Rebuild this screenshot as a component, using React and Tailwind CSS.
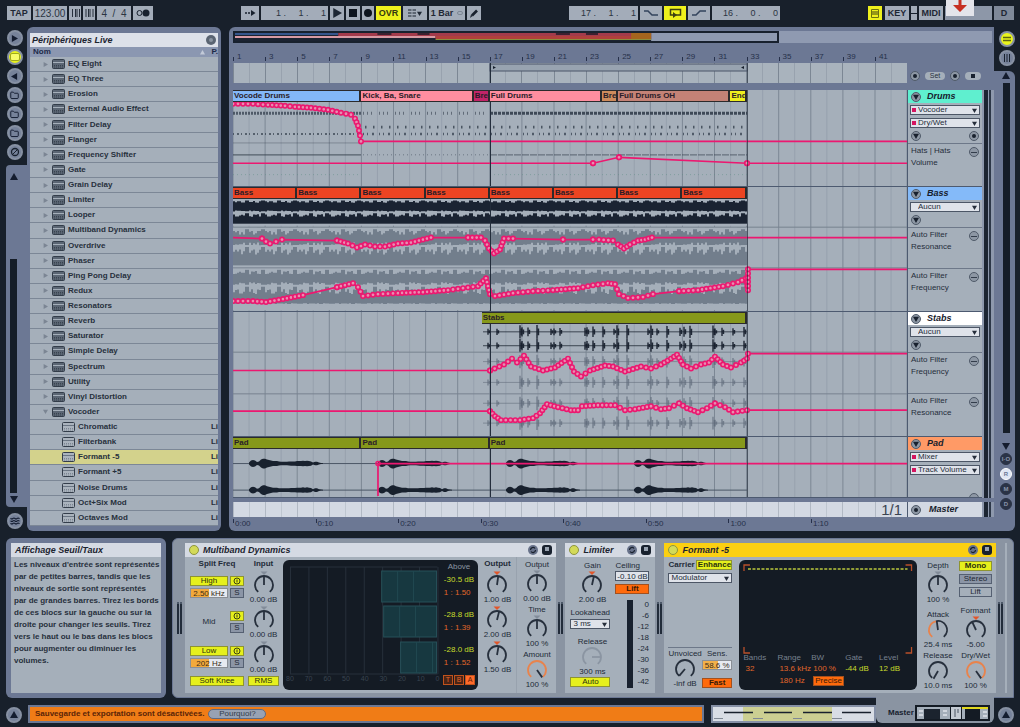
import React from "react";
import { Folder, Waves } from "lucide-react";

const INK = "#18212e";
const PINK = "#ec1870";
const LANE = "#a5afba";
const noise = (n) => {
  const v = Math.sin(n * 12.9898) * 43758.5453;
  return v - Math.floor(v);
};

/* ---------- small shared pieces ---------- */

function Cell({ className = "", children, label }) {
  return (
    <button
      aria-label={label}
      className={`flex h-3.5 items-center justify-center text-[9px] leading-none font-bold ${className}`}
    >
      {children}
    </button>
  );
}

function Field({ label, value, className }) {
  return (
    <input
      aria-label={label}
      defaultValue={value}
      className={`h-3.5 border-0 bg-[#a3acb9] p-0 text-[#2b3442] outline-none ${className}`}
    />
  );
}

function Round({ label, on, children }) {
  return (
    <button
      aria-label={label}
      className={`flex size-4 shrink-0 items-center justify-center rounded-full border-2 border-[#8791a3] text-[#131c30] ${on ? "bg-[#e9f41c]" : "bg-[#76829a]"}`}
    >
      {children}
    </button>
  );
}

function Tri({ dir = "right", size = 7, className = "" }) {
  const d = {
    right: "M1 0 L8 4 L1 8Z",
    left: "M7 0 L0 4 L7 8Z",
    up: "M0 7 L4 0 L8 7Z",
    down: "M0 1 L8 1 L4 8Z",
  }[dir];
  return (
    <svg width={size} height={size} viewBox="0 0 8 8" className={className} aria-hidden="true">
      <path d={d} fill="currentColor" />
    </svg>
  );
}

function Pick({ label, value, mark, className = "" }) {
  return (
    <span className={`flex h-2.5 items-center border border-[#4c5666] bg-[#dfe3ea] text-[#252d3a] ${className}`}>
      {mark !== undefined && <span className={`ml-px size-1 shrink-0 ${mark ? "bg-[#d4145f]" : ""}`} />}
      <select
        aria-label={label}
        className="h-2 min-w-0 flex-1 appearance-none border-0 bg-transparent p-0 pl-0.5 text-[8px] leading-[8px] outline-none"
      >
        <option>{value}</option>
      </select>
      <Tri dir="down" size={5} className="mr-0.5 shrink-0" />
    </span>
  );
}

function Knob({ label, value, angle = 0, marker, arc = 0, name, faded }) {
  const pt = (a, r) => {
    const t = (a * Math.PI) / 180;
    return [12 + r * Math.sin(t), 14 - r * Math.cos(t)];
  };
  const sweep = (from, to) => {
    const [x1, y1] = pt(from, 9);
    const [x2, y2] = pt(to, 9);
    return `M${x1} ${y1}A9 9 0 ${to - from > 180 ? 1 : 0} 1 ${x2} ${y2}`;
  };
  const [tx, ty] = pt(angle, 9);
  const ink = faded ? "#8b95a2" : "#27303d";
  const split = -140 + 280 * arc;
  return (
    <label
      className={`relative flex shrink-0 flex-col items-center text-[8px] leading-[9px] whitespace-nowrap text-[#222b38] ${marker ? "h-[35px] has-[b]:h-[45px]" : "h-10"}`}
    >
      {label && <b className="h-2.5 font-normal">{label}</b>}
      <input type="range" aria-label={label || name} className="sr-only" />
      <svg
        width="24" height={marker ? 24 : 20} viewBox={marker ? "0 0 24 24" : "0 4 24 20"}
        className="shrink-0" aria-hidden="true"
      >
        {arc < 1 && <path d={sweep(split, 140)} fill="none" stroke={ink} strokeWidth="1.8" />}
        {arc > 0 && <path d={sweep(-140, split)} fill="none" stroke="#e8834c" strokeWidth="1.8" />}
        <line x1="12" y1="14" x2={tx} y2={ty} stroke={ink} strokeWidth="1.8" />
        {marker && <path d="M8.500.5h7l-3.500 3.500z" fill={marker} />}
      </svg>
      <span className="h-[9px]">{value}</span>
    </label>
  );
}

const HOLLOW = "#828c99";
const ORANGE = "#e2562a";

function Chip({ children, tone = "yellow", className = "" }) {
  const tones = {
    yellow: "bg-[#e6f01c] border-[#8e9430] text-[#2b300f]",
    orange: "bg-[#ff6a0c] border-[#a2501e] text-[#3a1a08]",
    grey: "bg-[#8b95a6] border-[#556072] text-[#1f2835]",
    plain: "bg-[#a5afba] border-[#556072] text-[#1f2835]",
  };
  return (
    <button
      className={`flex h-2.5 shrink-0 items-center justify-center border text-[8px] leading-none whitespace-nowrap ${tones[tone]} ${className}`}
    >
      {children}
    </button>
  );
}

/* ---------- transport ---------- */

function Transport() {
  const g = "bg-[#a3acb9] text-[#1e2734]";
  return (
    <header className="flex h-[27px] shrink-0 items-start justify-between pt-1.5 pr-1.5 pl-[7px]">
      <div className="flex gap-0.5">
        <Cell className={`w-6 ${g}`}>TAP</Cell>
        <Field label="Tempo" value="123.00" className="w-[34px] text-center text-[10px]" />
        <Cell label="Nudge down" className={`w-3 ${g}`}>
          <svg width="9" height="8" viewBox="0 0 9 8"><path d="M1.500 0v8M4.500 0v8M6 0v8M8.500 0v8" stroke={INK} strokeWidth=".9" /></svg>
        </Cell>
        <Cell label="Nudge up" className={`w-3 ${g}`}>
          <svg width="9" height="8" viewBox="0 0 9 8"><path d="M1 0v8M3.500 0v8M5 0v8M8 0v8" stroke={INK} strokeWidth=".9" /></svg>
        </Cell>
        <Field label="Signature" value="4  /  4" className="w-[34px] text-center text-[10px]" />
        <Cell label="Metronome" className={`w-5 ${g}`}>
          <svg width="14" height="8" viewBox="0 0 14 8"><circle cx="3.500" cy="4" r="2.500" fill="none" stroke={INK} /><circle cx="10" cy="4" r="3.500" fill={INK} /></svg>
        </Cell>
      </div>
      <div className="flex gap-0.5">
        <Cell label="Follow" className={`w-[18px] ${g}`}>
          <svg width="11" height="8" viewBox="0 0 11 8"><path d="M0 4h7" stroke={INK} strokeDasharray="2 1" strokeWidth="1.500" /><path d="M6 1l4.500 3L6 7z" fill={INK} /></svg>
        </Cell>
        <Field label="Position" value="1 .     1 .     1" className="w-[67px] pr-0.5 text-right text-[9px]" />
        <Cell label="Play" className={`w-3.5 ${g}`}><Tri size={10} /></Cell>
        <Cell label="Stop" className={`w-3.5 ${g}`}><span className="size-2 bg-[#0d141e]" /></Cell>
        <Cell label="Record" className={`w-3 ${g}`}><span className="size-2 rounded-full bg-[#0d141e]" /></Cell>
        <Cell className="w-[25px] bg-[#eef01c] text-[8px] text-[#343710]">OVR</Cell>
        <Cell label="Quantize menu" className={`w-6 gap-px ${g}`}>
          <svg width="8" height="8" viewBox="0 0 8 8"><path d="M0 1h8M0 4h8M0 7h8" stroke={INK} strokeWidth="1.200" strokeDasharray="3.500 1" /></svg>
          <Tri dir="down" size={5} />
        </Cell>
        <Cell className={`w-9 gap-1 text-[8px] ${g}`}>1 Bar<span className="h-1 w-1.5 rounded-full border border-[#7d8794]" /></Cell>
        <Cell label="Draw mode" className={`w-3.5 ${g}`}>
          <svg width="9" height="9" viewBox="0 0 9 9"><path d="M0 9l1-3.500 1.500 1.500z" fill={INK} /><path d="M2 6.500L7 1.500" stroke={INK} strokeWidth="2.600" /></svg>
        </Cell>
      </div>
      <div className="flex gap-0.5">
        <Field label="Loop start" value="17 .     1 .     1" className="w-[69px] pr-0.5 text-right text-[9px]" />
        <Cell label="Punch in" className={`w-[22px] ${g}`}>
          <svg width="14" height="8" viewBox="0 0 14 8"><path d="M0 2h4l4 4h6" fill="none" stroke="#33435c" strokeWidth="1.500" /></svg>
        </Cell>
        <Cell label="Loop" className="w-[22px] bg-[#eef01c]">
          <svg width="13" height="10" viewBox="0 0 13 10"><path d="M7 7h4.500V1.500H1.500V7H4" fill="none" stroke="#3c3f12" strokeWidth="1.500" /><path d="M4 4v6l4-3z" fill="#3c3f12" /></svg>
        </Cell>
        <Cell label="Punch out" className={`w-[22px] ${g}`}>
          <svg width="14" height="8" viewBox="0 0 14 8"><path d="M0 6h4l4-4h6" fill="none" stroke="#33435c" strokeWidth="1.500" /></svg>
        </Cell>
        <Field label="Loop length" value="16 .     0 .     0" className="w-[68px] pr-0.5 text-right text-[9px]" />
      </div>
      <div className="relative flex gap-0.5">
        <Cell label="Computer keyboard" className="mr-px w-3.5 bg-[#eef01c]">
          <svg width="8" height="9" viewBox="0 0 8 9"><path d="M.5.5h7v8h-7z" fill="none" stroke="#6c7010" /><path d="M2 2v4M4 2v4M6 2v4" stroke="#3c3f12" /></svg>
        </Cell>
        <Cell className={`w-6 text-[8px] ${g}`}>KEY</Cell>
        <Cell label="Key indicators" className={`w-1.5 flex-col ${g}`}><span className="h-px w-full bg-[#18212e]" /></Cell>
        <Cell className={`w-6 text-[8px] ${g}`}>MIDI</Cell>
        <span className="block h-3.5 w-[47px] bg-[#8d97a8]" />
        <Cell className="w-5 bg-[#7f8999] text-[8px] text-[#1e2734]">D</Cell>
        <span className="absolute -top-1.5 left-[78px] flex h-4 w-7 justify-center bg-[#e3e4ea]">
          <svg width="16" height="14" viewBox="0 0 16 14" aria-hidden="true"><path d="M6.500 0h3v5H15L8 12 1 5h5.500z" fill="#c62f22" /></svg>
        </span>
      </div>
    </header>
  );
}

/* ---------- browser ---------- */

const DEVICES = [
  "EQ Eight", "EQ Three", "Erosion", "External Audio Effect", "Filter Delay", "Flanger", "Frequency Shifter",
  "Gate", "Grain Delay", "Limiter", "Looper", "Multiband Dynamics", "Overdrive", "Phaser", "Ping Pong Delay",
  "Redux", "Resonators", "Reverb", "Saturator", "Simple Delay", "Spectrum", "Utility", "Vinyl Distortion", "Vocoder",
];
const PRESETS = ["Chromatic", "Filterbank", "Formant -5", "Formant +5", "Noise Drums", "Oct+Six Mod", "Octaves Mod"];

function DeviceIcon({ light }) {
  return (
    <svg width="13" height="10" viewBox="0 0 13 10" className="shrink-0" aria-hidden="true">
      <rect x=".5" y=".5" width="12" height="9" rx="1" fill={light ? "#aab3bd" : "#5b6674"} stroke="#333d4a" />
      <path d="M1 3.500h11" stroke={light ? "#6a7583" : "#a5afba"} />
      <path d="M2 6.500h9M2 8h9" stroke={light ? "#7b8592" : "#39434f"} strokeDasharray="1 1" />
    </svg>
  );
}

function Browser() {
  return (
    <aside className="flex w-[215px] shrink-0">
      <div className="flex w-[21px] shrink-0 flex-col items-center">
        <div className="flex h-[138px] w-full shrink-0 flex-col items-center gap-[3px] pt-[3px] pr-1">
          <Round label="Hide browser"><Tri size={7} /></Round>
          <Round label="Live devices" on><span className="h-1.5 w-2 rounded-[1px] bg-[#f8fc6a] ring-1 ring-[#a0a81c]" /></Round>
          <Round label="Plug-ins"><Tri dir="left" size={7} /></Round>
          <Round label="Folder 1"><Folder size={9} strokeWidth={2.500} /></Round>
          <Round label="Folder 2"><Folder size={9} strokeWidth={2.500} /></Round>
          <Round label="Folder 3"><Folder size={9} strokeWidth={2.500} /></Round>
          <Round label="Hot-swap">
            <svg width="10" height="10" viewBox="0 0 10 10"><circle cx="5" cy="5" r="3.500" fill="none" stroke={INK} strokeWidth="1.300" /><path d="M2 8l6-6" stroke={INK} /></svg>
          </Round>
        </div>
        <div className="flex w-full flex-1 flex-col items-center rounded-l bg-[#6c7894] pt-2 pr-1.5 pb-1 text-[#141c2e]">
          <Tri dir="up" size={8} />
          <span className="mt-[78px] mb-0.5 w-[7px] flex-1 bg-[#151d28]" />
          <Tri dir="down" size={8} />
        </div>
        <div className="flex h-6 shrink-0 items-center pt-1 pr-1">
          <Round label="Groove pool"><Waves size={10} strokeWidth={2.500} /></Round>
        </div>
      </div>
      <section className="flex min-w-0 flex-1 flex-col rounded-md bg-[#6c7894] px-[3px] pt-1.5 pb-[5px]">
        <h2 className="flex h-3.5 shrink-0 items-center justify-between bg-[#dde1e9] px-0.5 text-[9px] leading-none font-bold text-[#1c2430] italic">
          Périphériques Live
          <span className="flex size-2.5 items-center justify-center rounded-full bg-[#5a6472]"><span className="size-1 rounded-full bg-[#8a94a1]" /></span>
        </h2>
        <div className="flex h-2.5 shrink-0 items-center bg-[#8b97b1] pl-[3px] text-[8px] leading-none font-bold text-[#1d2a48]">
          Nom
          <Tri dir="up" size={5} className="mr-1.5 ml-auto text-[#c3cad8]" />P.
        </div>
        <ul className="flex flex-1 flex-col overflow-hidden bg-[#a5afba] text-[8px] leading-none font-bold text-[#27303c]">
          {DEVICES.map((d) => (
            <li key={d} className="flex flex-1 border-b border-[#7c8796]">
              <button className="flex flex-1 items-center pl-[13px]">
                <Tri dir={d === "Vocoder" ? "down" : "right"} size={5} className="mr-1 text-[#7b8593]" />
                <DeviceIcon />
                <span className="ml-[3px]">{d}</span>
              </button>
            </li>
          ))}
          {PRESETS.map((p) => (
            <li key={p} className={`flex flex-1 border-b border-[#7c8796] ${p === "Formant -5" ? "bg-[#d3d28c]" : ""}`}>
              <button className="flex flex-1 items-center pl-8">
                <DeviceIcon light />
                <span className="ml-[3px] flex-1 text-left">{p}</span>
                <span>Li</span>
              </button>
            </li>
          ))}
        </ul>
      </section>
    </aside>
  );
}

/* ---------- arrangement ---------- */

function Grid({ height }) {
  return (
    <g shapeRendering="crispEdges">
      {Array.from({ length: 43 }, (_, i) => (
        <line
          key={i}
          x1={i * 16.05} x2={i * 16.05} y1="0" y2={height}
          stroke={i % 2 ? "#939daa" : "#77828f"} strokeWidth="1" strokeOpacity={i % 2 ? 0.8 : 0.9}
        />
      ))}
    </g>
  );
}

function Marks({ height }) {
  return (
    <g shapeRendering="crispEdges" stroke="#222c3a">
      <line x1="257.500" x2="257.500" y1="0" y2={height} />
      <line x1="514.500" x2="514.500" y1="0" y2={height} strokeOpacity=".7" />
    </g>
  );
}

function Automation({ points }) {
  const dots = [];
  for (let i = 1; i < points.length; i++) {
    const [x1, y1] = points[i - 1];
    const [x2, y2] = points[i];
    const len = Math.hypot(x2 - x1, y2 - y1);
    if (len > 26) {
      if (x1 > 0) dots.push([x1, y1]);
      if (x2 < 674) dots.push([x2, y2]);
      continue;
    }
    const n = Math.max(1, Math.round(len / 4.500));
    for (let k = 0; k < n; k++) dots.push([x1 + ((x2 - x1) * k) / n, y1 + ((y2 - y1) * k) / n]);
  }
  return (
    <g fill="none" stroke={PINK}>
      <polyline points={points.map((p) => p.join(",")).join(" ")} strokeWidth="1.700" />
      {dots.map(([x, y], i) => (
        <circle key={i} cx={x} cy={y} r="2.200" strokeWidth="1.600" fill="#e68fb0" />
      ))}
    </g>
  );
}

const CLIP = {
  blue: "bg-[#83b8f8]", pink: "bg-[#ff8ea0]", plum: "bg-[#c22468]", tan: "bg-[#cf8c5c]", rose: "bg-[#c48276]",
  yellow: "bg-[#eeee1e]", red: "bg-[#ec4422]", green: "bg-[#86981a]",
};

function Clips({ start = 0, items }) {
  return (
    <div className="relative flex h-3" style={{ paddingLeft: `${(start / 42) * 100}%` }}>
      {items.map(([name, bars, tone], i) => (
        <button
          key={i}
          className={`h-3 min-w-0 shrink-0 overflow-hidden border-y border-r-2 border-[#2b2a2c] pl-px text-left text-[8px] leading-[10px] font-bold whitespace-nowrap text-[#2a1c28] ${CLIP[tone]}`}
          style={{ width: `${(bars / (42 - start)) * 100}%` }}
        >
          {name}
        </button>
      ))}
    </div>
  );
}

function Meter() {
  return (
    <div className="flex w-3 shrink-0 gap-px bg-[#8e99ad] px-0.5">
      <span className="w-1 bg-[#1c2532]" />
      <span className="w-0.5 bg-[#2c3747]" />
    </div>
  );
}

function Dot({ label, kind = "minus" }) {
  return (
    <button aria-label={label} className="flex size-2.5 items-center justify-center rounded-full border border-[#4f5a69] bg-[#8d97a4] text-[#18212e]">
      {kind === "down" && <Tri dir="down" size={6} />}
      {kind === "plus" && <span className="size-1 rounded-full bg-[#18212e]" />}
      {kind === "minus" && <span className="h-px w-1.5 bg-[#333d4b]" />}
    </button>
  );
}

function Track({ name, tone, heightClass, height, clips, start, selects, headClass, lanes, addIcons, tail, children }) {
  return (
    <div className={`flex ${heightClass}`}>
      <div className="relative min-w-0 flex-1 border-b border-[#4d5a70] bg-[#a5afba]">
        <svg className="absolute inset-0 size-full" viewBox={`0 0 674 ${height}`} preserveAspectRatio="none" aria-hidden="true">
          <Grid height={height} />
          {children}
          <Marks height={height} />
        </svg>
        <Clips items={clips} start={start} />
      </div>
      <div className="flex w-[75px] shrink-0 flex-col border-b border-l border-[#4d5a70] bg-[#a5afba] text-[8px] leading-3 text-[#252e3b]">
        <div className={`flex shrink-0 flex-col gap-[3px] ${headClass}`}>
          <h3 className={`-mb-px flex h-[13px] shrink-0 items-center gap-1.5 pl-[3px] text-[9px] leading-none font-bold text-[#16202c] italic ${tone}`}>
            <Dot label={`Fold ${name}`} kind="down" />
            {name}
          </h3>
          {selects.map((s) => (
            <Pick key={s} label={`${name} automation`} value={s} mark={s !== "Aucun"} className="mx-0.5 shrink-0 last:mb-0" />
          ))}
          {addIcons && (
            <div className="flex justify-between px-[3px]">
              <Dot label="Automation lanes" kind="down" />
              {addIcons === 2 && <Dot label="Add lane" kind="plus" />}
            </div>
          )}
        </div>
        {lanes.map(([a, b], i) => (
          <div key={i} className={`flex justify-between px-[3px] pt-px ${i < lanes.length - 1 ? "h-[41px] border-b border-[#6d7889]" : ""}`}>
            <p className="whitespace-nowrap">{a}<br />{b}</p>
            <span className="pt-0.5"><Dot label={`Remove ${a} ${b}`} /></span>
          </div>
        ))}
        {tail && <div className="mt-auto flex h-1 justify-end overflow-hidden pr-[3px]"><Dot label="Remove lane" /></div>}
      </div>
      <Meter />
    </div>
  );
}

function DrumPattern() {
  return (
    <g stroke="#333e4c" fill="none">
      <path d="M0 23.500H128" strokeWidth="3" strokeDasharray="2 1" strokeOpacity=".75" />
      <path d="M0 44.500H128" strokeWidth="2" strokeDasharray="1 3 2 2" strokeOpacity=".7" />
      <path d="M0 65.500H128" strokeWidth="1.200" strokeOpacity=".7" />
      <path d="M0 53.500H128" strokeOpacity=".35" />
      <path d="M0 85.500H128M257 85.500H514" stroke="#5f8f86" strokeDasharray="1 3" strokeOpacity=".5" />
      <path d="M130 23.500H257" strokeWidth="3" strokeDasharray="1 3 1 3 1 7" strokeOpacity=".6" />
      <path d="M132 37.500H514" strokeWidth="3" strokeDasharray="1.500 6.500" strokeOpacity=".8" />
      <path d="M130 44.500H514" strokeWidth="2.500" strokeDasharray="1 3 1 4 2 5" strokeOpacity=".75" />
      <path d="M130 65.500H257" strokeDasharray="1 3" strokeOpacity=".5" />
      <path d="M257 23.500H514" strokeWidth="3" strokeDasharray="3 1" strokeOpacity=".9" />
      <path d="M257 65.500H514" strokeWidth="1.200" strokeDasharray="7 1" strokeOpacity=".55" />
    </g>
  );
}

function BassWave() {
  const strip = (y, h, seed, color) => {
    let d = "";
    for (let x = 0; x < 514; x += 2) {
      const p = x % 32;
      const gap = p % 16 > 11;
      const up = gap ? 0.5 : noise((p + seed) * 1.7) * h * 0.4;
      const dn = gap ? 0.5 : (0.35 + 0.65 * noise((p + seed) * 3.1 + 5)) * h;
      d += `M${x} ${y - up}h2v${up + dn + 1}h-2z`;
    }
    return <path d={d} fill={color} />;
  };
  return (
    <g>
      <rect x="0" y="12" width="514" height="26" fill="#1a2332" />
      {strip(12, 3, 1, LANE)}
      {strip(25, 4, 7, LANE)}
      <rect x="0" y="37" width="514" height="2" fill={LANE} />
      <rect x="0" y="41" width="514" height="83" fill="#727e8c" />
      {strip(41, 6, 4, LANE)}
      {strip(59, 8, 2, LANE)}
      <rect x="0" y="79" width="514" height="4" fill={LANE} />
      {strip(82, 5, 9, LANE)}
      {strip(99, 8, 3, LANE)}
      <rect x="0" y="119" width="514" height="5" fill={LANE} />
      {strip(118, 2, 6, LANE)}
    </g>
  );
}

const STAB_HITS = [255, 264, 287, 289, 295, 304, 318, 321, 327, 352, 354, 360, 370, 381, 384, 394, 415, 418, 424, 434, 447, 451, 457, 480, 482, 489, 500, 511];

function StabWave() {
  const row = (y, color, o) => (
    <g key={y} stroke={color} strokeOpacity={o}>
      <path d={`M250 ${y}H514`} strokeWidth=".8" />
      {STAB_HITS.map((x, i) => {
        const h = 3 + noise(i * 2.3) * 4;
        return <path key={i} d={`M${x} ${y - h}v${h * 2}M${x + 1.500} ${y - h / 2}v${h}`} strokeWidth="1.400" />;
      })}
    </g>
  );
  return (
    <g>
      {row(20, INK, 0.95)}
      {row(34, INK, 0.95)}
      {row(50, "#5f6b7a", 0.7)}
      {row(71, "#5f6b7a", 0.7)}
      {row(92, "#5f6b7a", 0.7)}
      {row(112, "#5f6b7a", 0.7)}
    </g>
  );
}

function PadWave() {
  const prof = [1, 3, 3.500, 3, 1.500, 2, 4, 5, 5, 4, 3.500, 3, 2.500, 2.500, 2.500, 2, 1.800, 1.800, 1.800, 1.800, 2, 2.200, 2.200, 2.200, 2.500, 2.500, 2.500, 2.800, 2.500, 2.800, 2.500, 2.200, 1, 1.800, 1.800, 1, 0.5, 0.4];
  const blob = (x0, y) => {
    const top = prof.map((v, i) => `${x0 + i * 2},${y - v}`);
    const bot = prof.map((v, i) => `${x0 + i * 2},${y + v}`).reverse();
    return <polygon key={`${x0}-${y}`} points={[...top, ...bot].join(" ")} fill={INK} />;
  };
  return (
    <g>
      <path d="M0 27H514M0 54H514" stroke="#4b5665" />
      {[16, 145, 273, 401].map((x) => [blob(x, 27), blob(x, 54)])}
    </g>
  );
}

const DRUM_LINE = [[0, 14], [20, 14], [35, 15], [52, 16], [62, 17], [78, 18], [95, 20], [108, 23], [118, 25], [122, 29], [125, 36], [127, 46], [128, 52], [674, 52]];
const DRUM_VOL = [[0, 74], [360, 74], [386, 68], [514, 74], [674, 74]];
const BASS_RES = [[0, 51], [29, 52], [33, 55], [37, 57], [43, 55], [49, 53], [104, 54], [115, 57], [124, 61], [132, 58], [142, 60], [152, 60], [165, 57], [178, 56], [190, 53], [198, 51], [235, 51], [248, 51], [252, 54], [256, 62], [261, 67], [267, 63], [271, 52], [280, 52], [330, 53], [360, 53], [366, 53], [380, 54], [385, 58], [391, 62], [397, 58], [405, 54], [412, 53], [419, 51], [674, 51]];
const BASS_FREQ = [[0, 115], [20, 115], [33, 116], [50, 113], [70, 109], [104, 101], [120, 97], [125, 101], [130, 110], [145, 108], [165, 107], [190, 106], [215, 104], [230, 102], [245, 100], [253, 92], [257, 108], [262, 110], [280, 107], [300, 105], [320, 104], [345, 102], [360, 99], [375, 97], [382, 98], [386, 108], [395, 112], [410, 111], [420, 108], [446, 105], [465, 104], [490, 100], [505, 96], [513, 92], [515, 104], [515, 83], [674, 83]];
const STAB_FREQ = [[0, 59], [257, 59], [271, 53], [279, 47], [284, 51], [291, 44], [298, 55], [310, 59], [322, 56], [335, 47], [341, 60], [348, 65], [357, 59], [372, 54], [380, 55], [392, 60], [408, 55], [418, 57], [428, 53], [438, 47], [444, 43], [450, 53], [458, 57], [468, 53], [476, 51], [482, 45], [490, 53], [498, 56], [508, 51], [514, 47], [515, 42], [674, 42]];
const STAB_RES = [[0, 100], [257, 100], [262, 105], [268, 109], [287, 109], [300, 107], [307, 102], [314, 93], [325, 96], [338, 99], [345, 99], [349, 95], [365, 94], [382, 94], [392, 99], [402, 98], [418, 95], [428, 98], [436, 97], [446, 92], [454, 97], [465, 101], [474, 97], [482, 92], [492, 96], [500, 101], [514, 99], [674, 99]];

function Overview() {
  return (
    <div className="mr-0.5 flex h-3 shrink-0 bg-[#8f9ab1]">
      <div className="w-[72%] border-2 border-[#18212e] bg-[#8f9ab1]">
        <svg className="block h-2 w-full" viewBox="0 0 541 8" preserveAspectRatio="none" aria-hidden="true">
          <rect width="415" height="8" fill="#1b2332" />
          <rect width="103" height="2" fill="#35558c" />
          <rect x="103" width="312" height="3" fill="#a33a4b" />
          <path d="M142 1h14M182 1h12M320 1h14M350 1h12" stroke="#3b2030" strokeWidth="2" />
          <rect y="3" width="200" height="2" fill="#d89aa4" />
          <rect x="200" y="3" width="215" height="3" fill="#b0413c" />
          <rect x="200" y="6" width="215" height="1" fill="#8c8f3c" />
          <rect x="395" width="20" height="6" fill="#a5651e" />
        </svg>
      </div>
    </div>
  );
}

function Arrangement() {
  return (
    <main className="flex min-w-0 flex-1">
      <section className="flex min-w-0 flex-1 flex-col rounded-l-md bg-[#6c7894] pt-1 pl-1">
        <Overview />
        <div className="flex">
          <div className="min-w-0 flex-1">
            <ol className="flex h-5 items-end text-[8px] leading-none text-[#26304a]">
              {Array.from({ length: 21 }, (_, i) => (
                <li key={i} className="flex min-w-0 flex-1 items-end pb-0.5">
                  <span className="mr-[3px] h-1 w-px bg-[#26304a]" />{i * 2 + 1}
                </li>
              ))}
            </ol>
            <svg className="block h-5 w-full bg-[#a9b3bd]" viewBox="0 0 674 20" preserveAspectRatio="none" aria-hidden="true">
              <Grid height={20} />
              <rect x="257" y="1" width="257" height="7" fill="#98a3b0" stroke="#4a5568" />
              <path d="M260 3v3l3-1.500zM511 3v3l-3-1.500z" fill={INK} />
              <Marks height={20} />
            </svg>
          </div>
          <div className="flex w-[87px] shrink-0 items-end gap-[5px] pb-0.5 pl-[3px]">
            <Dot label="Previous locator" kind="plus" />
            <button className="mb-px h-2 w-5 rounded-full bg-[#a5afba] text-[7px] leading-[8px] text-[#27303d]">Set</button>
            <Dot label="Next locator" kind="plus" />
            <button aria-label="Lock envelopes" className="mb-px flex h-2 w-4 items-center justify-center rounded-sm bg-[#a5afba]"><span className="size-1 bg-[#18212e]" /></button>
          </div>
        </div>
        <div className="mt-[7px] flex flex-col">
          <Track
            name="Drums" tone="bg-[#5fefcf]" heightClass="h-[97px]" height={97}
            clips={[["Vocode Drums", 8, "blue"], ["Kick, Ba, Snare", 7, "pink"], ["Bre", 1, "plum"], ["Full Drums", 7, "pink"], ["Bre", 1, "tan"], ["Full Drums OH", 7, "rose"], ["End", 1, "yellow"]]}
            selects={["Vocoder", "Dry/Wet"]} headClass="h-[54px] border-b border-[#6d7889]" addIcons={2} lanes={[["Hats | Hats", "Volume"]]}
          >
            <DrumPattern />
            <Automation points={DRUM_LINE} />
            <Automation points={DRUM_VOL} />
          </Track>
          <Track
            name="Bass" tone="bg-[#84baf9]" heightClass="h-[125px]" height={125}
            clips={Array.from({ length: 8 }, () => ["Bass", 4, "red"])}
            selects={["Aucun"]} headClass="h-[41px] border-b border-[#6d7889]" addIcons={1}
            lanes={[["Auto Filter", "Resonance"], ["Auto Filter", "Frequency"]]}
          >
            <BassWave />
            <path d="M0 40.500H674M0 81.500H674" stroke="#77828f" />
            <Automation points={BASS_RES} />
            <Automation points={BASS_FREQ} />
          </Track>
          <Track
            name="Stabs" tone="bg-white" heightClass="h-[125px]" height={125} start={15.500}
            clips={[["Stabs", 16.500, "green"]]}
            selects={["Aucun"]} headClass="h-[41px] border-b border-[#6d7889]" addIcons={1}
            lanes={[["Auto Filter", "Frequency"], ["Auto Filter", "Resonance"]]}
          >
            <StabWave />
            <path d="M0 40.500H674M0 82.500H674" stroke="#77828f" />
            <Automation points={STAB_FREQ} />
            <Automation points={STAB_RES} />
          </Track>
          <Track
            name="Pad" tone="bg-[#ff9a66]" heightClass="h-[61px]" height={61}
            clips={[["Pad", 8, "green"], ["Pad", 8, "green"], ["Pad", 16, "green"]]}
            selects={["Mixer", "Track Volume"]} headClass="" lanes={[]} tail
          >
            <PadWave />
            <path d="M145 60V27H674" fill="none" stroke={PINK} strokeWidth="1.700" />
            <circle cx="145" cy="27" r="2.100" fill="none" stroke={PINK} strokeWidth="1.400" />
          </Track>
        </div>
        <div className="mt-1 flex h-[15px] shrink-0">
          <div className="relative min-w-0 flex-1 bg-[#d3d9e3]">
            <svg className="absolute inset-0 size-full opacity-40" viewBox="0 0 674 15" preserveAspectRatio="none" aria-hidden="true"><Grid height={15} /></svg>
            <span className="relative block pr-[5px] text-right text-[15px] leading-[15px] text-[#3a4452]">1/1</span>
          </div>
          <h3 className="flex w-[75px] items-center gap-2 border-l border-[#4d5a70] bg-[#d3d9e3] pl-[3px] text-[9px] leading-none font-bold text-[#16202c] italic">
            <Dot label="Unfold Master" kind="plus" />Master
          </h3>
          <Meter />
        </div>
        <ol className="flex h-3.5 shrink-0 pt-0.5 text-[8px] leading-[9px] text-[#26304a]">
          {["0:00", "0:10", "0:20", "0:30", "0:40", "0:50", "1:00", "1:10"].map((t) => (
            <li key={t} className="flex w-[10.850%] gap-px"><span className="h-1 w-px bg-[#26304a]" />{t}</li>
          ))}
        </ol>
      </section>
      <nav className="flex w-[26px] shrink-0 flex-col pr-[5px]">
        <div className="flex h-11 shrink-0 flex-col items-center gap-[3px] pt-1 pl-1">
          <Round label="Arrangement view" on><svg width="8" height="8" viewBox="0 0 8 8"><path d="M0 2.500h8M0 5.500h8" stroke="#5d6412" strokeWidth="1.300" /></svg></Round>
          <Round label="Session view"><svg width="8" height="8" viewBox="0 0 8 8"><path d="M1.500 0v8M4 0v8M6.500 0v8" stroke={INK} /></svg></Round>
        </div>
        <div className="flex flex-1 flex-col items-center gap-[3px] rounded-r-md bg-[#6c7894] pb-[21px] pl-[3px] text-[#141c2e]">
          <Tri dir="up" size={8} className="mt-px" />
          <span className="w-[7px] flex-1 bg-[#151d28]" />
          <Tri dir="down" size={8} className="mt-1.5" />
          {[["I·O", ""], ["R", "on"], ["M", ""], ["D", ""]].map(([t, on]) => (
            <button key={t} className={`flex size-3 shrink-0 items-center justify-center rounded-full border text-[6px] leading-none font-bold ${on ? "border-white bg-[#dfe6f4] text-[#6c7894]" : "border-[#2a3346] bg-[#2a3346] text-[#8a95ab]"}`}>{t}</button>
          ))}
        </div>
      </nav>
    </main>
  );
}

/* ---------- devices ---------- */

function Device({ title, className, titleClass = "bg-[#d5dae3]", children }) {
  return (
    <section className={`flex min-w-0 flex-col bg-[#a5afba] ${className}`}>
      <h2 className={`flex h-3.5 shrink-0 items-center gap-1 px-1 text-[9px] leading-none font-bold whitespace-nowrap text-[#1c2430] italic ${titleClass}`}>
        <button aria-label={`${title} on`} className="size-2.5 rounded-full border border-[#8d9440] bg-[#d3da58]" />
        {title}
        <button aria-label="Hot-swap preset" className="ml-auto flex size-2.5 items-center justify-center rounded-full bg-[#68728a]">
          <svg width="8" height="8" viewBox="0 0 8 8"><path d="M1.500 4a2.500 2.500 0 0 1 4.500-1.500M6.500 4A2.500 2.500 0 0 1 2 5.500" fill="none" stroke={INK} strokeWidth="1.200" /></svg>
        </button>
        <button aria-label="Save preset" className="flex size-2.5 items-start justify-center rounded-[3px] bg-[#18212e] pt-0.5"><span className="h-1 w-1 bg-[#98a2b0]" /></button>
      </h2>
      <div className="flex flex-1">{children}</div>
    </section>
  );
}

function Gutter({ className = "w-[9px]" }) {
  return (
    <div className={`flex shrink-0 items-center justify-center gap-px ${className}`}>
      <span className="h-8 w-0.5 border-t-2 border-[#4c5868] bg-[#222c3a]" />
      <span className="h-8 w-0.5 border-t-2 border-[#4c5868] bg-[#222c3a]" />
    </div>
  );
}

function Band({ name, freq }) {
  return (
    <div className="flex h-[35px] gap-0.5 pt-[5px]">
      <div className="flex flex-1 flex-col gap-0.5">
        {freq ? (
          <>
            <Chip>{name}</Chip>
            <input
              aria-label={`${name} crossover`} defaultValue={freq}
              className="h-2.5 w-full min-w-0 border border-[#8a8f96] bg-linear-to-r from-[#f2a93c] from-50% to-[#e6eaf0] to-50% p-0 text-center text-[8px] leading-none text-[#3a2c18]"
            />
          </>
        ) : (
          <span className="pt-[7px] text-center text-[8px] leading-none">{name}</span>
        )}
      </div>
      <div className="flex w-3.5 flex-col gap-0.5">
        <Chip><svg width="8" height="8" viewBox="0 0 8 8" aria-label="On"><circle cx="4" cy="4" r="3" fill="none" stroke="#3b4210" /><path d="M4 2.500v3" stroke="#3b4210" /></svg></Chip>
        <Chip tone="grey">S</Chip>
      </div>
    </div>
  );
}

function Multiband() {
  return (
    <Device title="Multiband Dynamics" className="flex-[372_1_0]">
      <div className="ml-[5px] flex w-[54px] shrink-0 flex-col text-[#222b38]">
        <h3 className="h-3.5 text-center text-[8px] leading-[14px] font-bold">Split Freq</h3>
        <Band name="High" freq="2.50 kHz" />
        <Band name="Mid" />
        <Band name="Low" freq="202 Hz" />
        <Chip>Soft Knee</Chip>
      </div>
      <div className="ml-1 flex w-[31px] shrink-0 flex-col">
        <h3 className="h-3.5 text-center text-[8px] leading-[14px] font-bold text-[#222b38]">Input</h3>
        {["High", "Mid", "Low"].map((n) => <Knob key={n} name={`${n} input`} value="0.00 dB" marker={HOLLOW} />)}
        <Chip>RMS</Chip>
      </div>
      <div className="my-[3px] ml-1 flex min-w-0 flex-1 rounded-md bg-[#141b24] text-[8px] leading-none">
        <div className="flex min-w-0 flex-1 flex-col pl-[7px]">
          <svg className="h-[115px] w-full" viewBox="0 0 150 115" preserveAspectRatio="none" aria-hidden="true">
            <path d="M0 7H148M0 114H148" stroke="#27303b" />
            {Array.from({ length: 9 }, (_, i) => <path key={i} d={`M${i * 18.500 + 0.5} 7V114`} stroke="#27303b" />)}
            {[[92, 11], [94, 46], [111, 82]].map(([x, y]) => (
              <g key={y}>
                <rect x={x} y={y} width={147 - x} height="31" fill="#173840" stroke="#275058" />
                <path d={`M${x + 16} ${y}v31M${x + 32} ${y}v31`} stroke="#214850" />
              </g>
            ))}
          </svg>
          <div className="-ml-1 flex justify-between text-[7px] text-[#3a4450]">
            {[80, 70, 60, 50, 40, 30, 20, 10, 0].map((n) => <span key={n}>{n}</span>)}
          </div>
        </div>
        <div className="flex w-[39px] shrink-0 flex-col items-center pt-[3px] whitespace-nowrap">
          <span className="mb-[5px] text-[#8a94a2]">Above</span>
          {[["-30.5 dB", "1 : 1.50"], ["-28.8 dB", "1 : 1.39"], ["-28.0 dB", "1 : 1.52"]].map(([a, b]) => (
            <p key={a} className="flex h-[35px] flex-col gap-[5px]">
              <span className="text-[#c8dc2c]">{a}</span>
              <span className="text-[#e0662a]">{b}</span>
            </p>
          ))}
          <div className="-mt-1.5 flex gap-px">
            {["T", "B", "A"].map((t) => (
              <button key={t} className={`size-2.5 border border-[#c0521c] text-[7px] leading-[8px] ${t === "A" ? "bg-[#ff6a2a] text-[#5a1d08]" : "bg-[#4a2416] text-[#e0662a]"}`}>{t}</button>
            ))}
          </div>
        </div>
      </div>
      <div className="w-[39px] shrink-0 border-r border-[#98a2ae]">
        <h3 className="h-3.5 text-center text-[8px] leading-[14px] font-bold text-[#222b38]">Output</h3>
        <Knob name="High output" value="1.00 dB" angle={8} marker={ORANGE} />
        <Knob name="Mid output" value="2.00 dB" angle={14} marker={ORANGE} />
        <Knob name="Low output" value="1.50 dB" angle={10} marker={ORANGE} />
      </div>
      <div className="w-[39px] shrink-0 pt-[3px]">
        <Knob label="Output" value="0.00 dB" marker={HOLLOW} />
        <Knob label="Time" value="100 %" marker={HOLLOW} />
        <Knob label="Amount" value="100 %" angle={145} arc={1} />
      </div>
    </Device>
  );
}

function Limiter() {
  return (
    <Device title="Limiter" className="w-[90px] shrink-0">
      <div className="flex w-[49px] shrink-0 flex-col pt-1 pl-[5px] text-[8px] leading-[9px] whitespace-nowrap text-[#222b38]">
        <Knob label="Gain" value="2.00 dB" angle={12} marker={ORANGE} />
        <span className="mt-0.5">Lookahead</span>
        <Pick label="Lookahead" value="3 ms" className="mt-0.5 mr-1 shrink-0" />
        <div className="mt-2"><Knob label="Release" value="300 ms" angle={90} faded /></div>
        <Chip className="mr-1">Auto</Chip>
      </div>
      <div className="flex min-w-0 flex-1 flex-col pt-1 pr-1.5 pl-px text-[8px] leading-[9px] text-[#222b38]">
        <label htmlFor="ceiling">Ceiling</label>
        <input id="ceiling" defaultValue="-0.10 dB" className="mt-px h-2.5 w-full border border-[#4c5666] bg-[#dfe3ea] p-0 text-center" />
        <Chip tone="orange" className="mt-[3px] font-bold">Lift</Chip>
        <div className="mt-1.5 flex gap-1 pl-3">
          <span className="w-1.5 shrink-0 bg-[#18212e]" />
          <div className="flex flex-col items-end">
            {["0", "-6", "-12", "-18", "-24", "-30", "-36", "-42"].map((n) => <span key={n} className="h-[11px]">{n}</span>)}
          </div>
        </div>
      </div>
    </Device>
  );
}

function Formant() {
  return (
    <Device title="Formant -5" className="flex-[332_1_0]" titleClass="bg-[#fbd012]">
      <div className="flex w-[72px] shrink-0 flex-col px-1 pt-[3px] pb-1 text-[8px] leading-[9px] text-[#222b38]">
        <div className="flex justify-between font-bold">Carrier<Chip className="w-9 font-bold">Enhance</Chip></div>
        <Pick label="Carrier" value="Modulator" className="mt-[3px]" />
        <div className="mt-auto flex justify-between border-t border-[#6d7889] pt-px">
          <Knob label="Unvoiced" value="-inf dB" angle={-140} />
          <div className="flex w-[31px] flex-col">
            <label htmlFor="sens" className="text-center">Sens.</label>
            <input id="sens" defaultValue="58.6 %" className="mt-0.5 h-2.5 w-full border border-[#8a8f96] bg-linear-to-r from-[#f2b04a] from-55% to-[#e6eaf0] to-55% p-0 text-center text-[#3a2c18]" />
            <Chip tone="orange" className="mt-2 font-bold">Fast</Chip>
          </div>
        </div>
      </div>
      <div className="my-[3px] ml-[3px] flex min-w-0 flex-1 flex-col rounded-md bg-[#141b24] px-1 pt-1 text-[8px] leading-none whitespace-nowrap text-[#e0662a]">
        <svg className="h-[90px] w-full" viewBox="0 0 170 90" preserveAspectRatio="none" aria-hidden="true">
          <path d="M1 7V1H7M163 1h6V7M1 83v6H7M163 89h6V83" fill="none" stroke="#b8502a" strokeWidth="1.300" />
          <path d="M5 5H165" stroke="#b9c83c" strokeWidth="1.500" strokeDasharray="3 1.500" />
        </svg>
        <dl className="flex">
          <div className="w-[20%]"><dt className="text-[#77818f]">Bands</dt><dd className="pt-[3px] pl-0.5">32</dd></div>
          <div className="relative w-[20%]"><dt className="text-[#77818f]">Range</dt><dd className="flex flex-col gap-1 pt-[3px] pl-0.5"><span>13.6 kHz</span><span>180 Hz</span></dd></div>
          <div className="w-[20%]"><dt className="text-[#77818f]">BW</dt><dd className="flex flex-col items-start gap-[3px] pt-[3px] pl-0.5">100 %<Chip tone="orange" className="px-px">Precise</Chip></dd></div>
          <div className="w-[20%]"><dt className="text-[#77818f]">Gate</dt><dd className="pt-[3px] text-[#c8dc2c]">-44 dB</dd></div>
          <div className="w-[20%]"><dt className="text-[#77818f]">Level</dt><dd className="pt-[3px] text-[#c8dc2c]">12 dB</dd></div>
        </dl>
      </div>
      <div className="flex w-[42px] shrink-0 flex-col pt-1">
        <Knob label="Depth" value="100 %" marker={HOLLOW} />
        <div className="flex h-[45px] flex-col pt-1">
          <Knob label="Attack" value="25.4 ms" angle={-8} arc={0.45} />
        </div>
        <Knob label="Release" value="10.0 ms" angle={-150} />
      </div>
      <div className="w-[37px] shrink-0 pt-1 pr-1">
        <div className="flex h-[45px] flex-col gap-[3px]">
          <Chip className="font-bold">Mono</Chip>
          <Chip tone="grey">Stereo</Chip>
          <Chip tone="plain">Lift</Chip>
        </div>
        <Knob label="Formant" value="-5.00" angle={-25} marker={ORANGE} />
        <Knob label="Dry/Wet" value="100 %" angle={145} arc={1} />
      </div>
    </Device>
  );
}

const HELP = [
  "Les niveaux d'entrée sont représentés", "par de petites barres, tandis que les", "niveaux de sortie sont représentés",
  "par de grandes barres. Tirez les bords", "de ces blocs sur la gauche ou sur la", "droite pour changer les seuils. Tirez",
  "vers le haut ou le bas dans les blocs", "pour augmenter ou diminuer les", "volumes.",
];

function Bottom() {
  return (
    <div className="mt-[7px] flex h-40 shrink-0 gap-1.5 pr-1.5 pl-1.5">
      <aside className="w-40 shrink-0 rounded-md bg-[#6c7894] p-[5px]">
        <div className="h-full bg-[#a5afba]">
          <h2 className="flex h-3.5 items-center bg-[#d5dae3] pl-1 text-[9px] leading-none font-bold text-[#1c2430] italic">Affichage Seuil/Taux</h2>
          <p className="pt-0.5 pl-[3px] text-[8px] leading-3 font-bold whitespace-nowrap text-[#27303c]">
            {HELP.map((l) => <span key={l} className="block">{l}</span>)}
          </p>
        </div>
      </aside>
      <div className="flex min-w-0 flex-1 rounded-t-md rounded-bl-md border border-[#6c7894] bg-[#8a94a2] py-1">
        <Gutter className="w-3" />
        <Multiband />
        <Gutter />
        <Limiter />
        <Gutter />
        <Formant />
        <Gutter />
        <span className="w-2 shrink-0 border-l-2 border-[#a5afba]" />
      </div>
    </div>
  );
}

function Status() {
  return (
    <footer className="mb-1 flex h-[25px] shrink-0 items-end pr-1.5 pl-1.5">
      <Round label="Toggle help"><Tri dir="up" size={8} /></Round>
      <div className="ml-1.5 flex h-[18px] min-w-0 flex-1 items-center border-2 border-[#6c7894] bg-[#f07c16] pl-[5px] text-[8px] leading-none font-bold whitespace-nowrap text-[#5a2408]">
        Sauvegarde et exportation sont désactivées.
        <button className="ml-1 h-2.5 w-[58px] rounded-full border border-[#5f6b82] bg-[#98a2b3] font-normal text-[#333d4b]">Pourquoi?</button>
      </div>
      <div className="ml-[7px] h-[18px] w-[165px] shrink-0 border-2 border-[#8590a6] bg-[#d8dde5]">
        <svg className="size-full" viewBox="0 0 161 14" preserveAspectRatio="none" aria-label="Clip overview">
          <rect x="30" width="89" height="14" fill="#cccf92" />
          <path d="M11 5.500h29M51 5.500h28M90 5.500h29M129 5.500h29" stroke={INK} strokeWidth="1.500" />
          <path d="M1 11.500h9M40 11.500h10M80 11.500h9M119 11.500h10" stroke="#7f8894" />
        </svg>
      </div>
      <div className="-mt-px flex h-[26px] w-[118px] shrink-0 items-end justify-end rounded-b-md bg-[#8a94a2] pr-1 pb-0.5">
        <span className="mr-auto mb-1 pl-3 text-[8px] leading-none font-bold text-[#18212e]">Master</span>
        <svg width="75" height="16" viewBox="0 0 75 16" aria-label="Device chain overview">
          <rect width="75" height="16" fill="#141b24" />
          <rect x="2" y="2" width="33" height="12" fill="#a5afba" />
          <rect x="9" y="4" width="16" height="10" fill="#1b232e" />
          <rect x="36" y="2" width="10" height="12" fill="#c5cbd3" />
          <path d="M40 4v8M43 4v4" stroke="#4a5462" />
          <rect x="47" y="2" width="26" height="12" fill="#a5afba" />
          <rect x="47" y="2" width="26" height="2" fill="#e2d820" />
          <rect x="50" y="4" width="15" height="10" fill="#141b24" />
          <path d="M4 6h4M4 10h4M28 6h4M28 10h4M68 7h4M68 11h4" stroke="#dfe3ea" strokeWidth="1.500" />
        </svg>
      </div>
      <span className="ml-1 block"><Round label="Toggle devices"><Tri dir="up" size={8} /></Round></span>
    </footer>
  );
}

export default function App() {
  return (
    <div className="flex min-h-screen flex-col bg-[#18202b] font-['Liberation_Sans',Arial,sans-serif]">
      <Transport />
      <div className="flex flex-1 gap-2 pl-1.5">
        <Browser />
        <Arrangement />
      </div>
      <Bottom />
      <Status />
    </div>
  );
}
